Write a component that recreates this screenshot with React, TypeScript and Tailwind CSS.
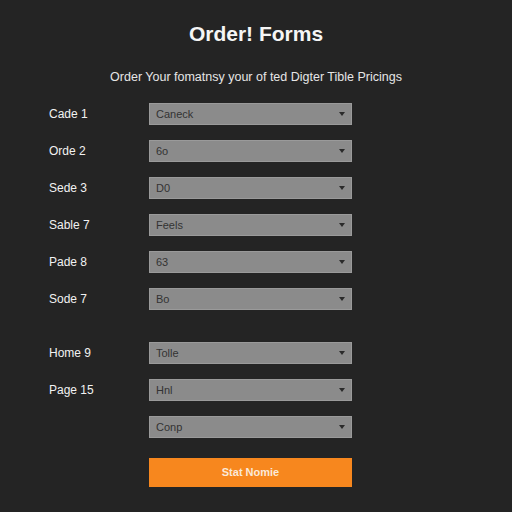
type Field = { label: string; value: string };

const topFields: Field[] = [
  { label: "Cade 1", value: "Caneck" },
  { label: "Orde 2", value: "6o" },
  { label: "Sede 3", value: "D0" },
  { label: "Sable 7", value: "Feels" },
  { label: "Pade 8", value: "63" },
  { label: "Sode 7", value: "Bo" },
];

const bottomFields: Field[] = [
  { label: "Home 9", value: "Tolle" },
  { label: "Page 15", value: "Hnl" },
  { label: "", value: "Conp" },
];

function SelectRow({ label, value }: Field) {
  return (
    <div className="flex items-center">
      <span className="w-[100px] text-[12px] text-[#f2f2f2]">{label}</span>
      <div className="flex h-[22px] w-[203px] items-center justify-between border border-[#9a9a9a] bg-[#8b8b8b] pl-[6px] pr-[4px]">
        <span className="text-[11px] text-[#333333]">{value}</span>
        {/* small filled caret */}
        <svg width="8" height="6" viewBox="0 0 8 6" className="mr-[1px]">
          <path d="M1 1h6L4 5z" fill="#2a2a2a" />
        </svg>
      </div>
    </div>
  );
}

export default function App() {
  return (
    <div
      className="h-[512px] w-[512px] bg-[#242424] text-white"
      style={{ fontFamily: '"Liberation Sans", Arial, sans-serif' }}
    >
      <div className="flex flex-col items-center pt-[22px]">
        <h1 className="text-[21px] font-bold leading-[24px] text-[#f5f5f5]">Order! Forms</h1>
        <p className="mt-[23px] text-[12.5px] leading-[16px] text-[#e6e6e6]">
          Order Your fomatnsy your of ted Digter Tible Pricings
        </p>
      </div>

      <div className="flex flex-col pl-[49px] pt-[18px]">
        <div className="flex flex-col gap-[15px]">
          {topFields.map((f, i) => (
            <SelectRow key={i} {...f} />
          ))}
        </div>
        <div className="mt-[32px] flex flex-col gap-[15px]">
          {bottomFields.map((f, i) => (
            <SelectRow key={i} {...f} />
          ))}
        </div>
        <div className="mt-[20px] flex">
          <div className="w-[100px]" />
          <button className="flex h-[29px] w-[203px] items-center justify-center bg-[#f7871e] text-[11px] font-bold text-[#fbe9d8]">
            Stat Nomie
          </button>
        </div>
      </div>
    </div>
  );
}
